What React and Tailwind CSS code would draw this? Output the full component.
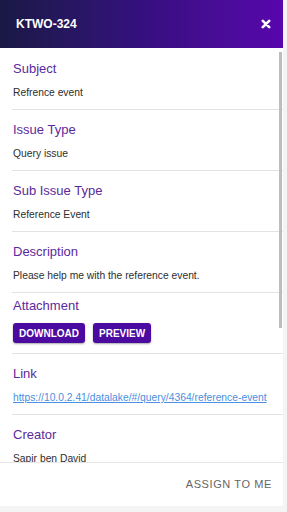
import React from "react";

const font = { fontFamily: '"Liberation Sans", Arial, sans-serif' };

function Section({ label, children, first }) {
  return (
    <div className="ml-[12px] border-b border-[#e3e3e3]">
      <div className={`${first ? "pt-[13px]" : "pt-[12px]"} pl-[1px] pb-[10px]`}>
        <div className="text-[13px] leading-[16px] text-[#5b2a9c]">{label}</div>
        <div className="mt-[10px] text-[10.3px] leading-[12px] text-[#2e2e2e]">{children}</div>
      </div>
    </div>
  );
}

export default function App() {
  return (
    <div className="w-[287px] h-[512px] bg-[#f4f4f4] overflow-hidden" style={font}>
      <div className="w-[283px] h-[506px] bg-white flex flex-col">
        <div className="h-[48px] shrink-0 flex items-center justify-between pl-[16px] pr-[12px] bg-linear-to-r from-[#1a1846] via-[#350f7e] to-[#5806ad]">
          <span className="text-white text-[12px] font-bold">KTWO-324</span>
          <svg width="10" height="10" viewBox="0 0 10 10" className="mt-[-1px]">
            <path d="M1.8 1.8 L8.2 8.2 M8.2 1.8 L1.8 8.2" stroke="white" strokeWidth="2.6" strokeLinecap="round" />
          </svg>
        </div>
        <div className="flex-1 overflow-hidden relative">
          <Section label="Subject" first>Refrence event</Section>
          <Section label="Issue Type">Query issue</Section>
          <Section label="Sub Issue Type">Reference Event</Section>
          <Section label="Description">Please help me with the reference event.</Section>
          <div className="ml-[12px] border-b border-[#e3e3e3]">
            <div className="pt-[5px] pl-[1px] pb-[10px]">
              <div className="text-[13px] leading-[16px] text-[#5b2a9c]">Attachment</div>
              <div className="mt-[9px] flex gap-[8px]">
                <button className="h-[20px] px-[6px] rounded-[3px] bg-[#4b0aa0] text-white text-[10px] font-bold shadow-[0_1px_2px_rgba(0,0,0,0.35)]">
                  DOWNLOAD
                </button>
                <button className="h-[20px] px-[6px] rounded-[3px] bg-[#4b0aa0] text-white text-[10px] font-bold shadow-[0_1px_2px_rgba(0,0,0,0.35)]">
                  PREVIEW
                </button>
              </div>
            </div>
          </div>
          <Section label="Link">
            <span className="text-[#4a8fe0] underline">https://10.0.2.41/datalake/#/query/4364/reference-event</span>
          </Section>
          <Section label="Creator">Sapir ben David</Section>
          <div className="absolute left-[279px] top-[4px] w-[3px] h-[276px] bg-[#bdbdbd]" />
        </div>
        <div className="h-[44px] shrink-0 border-t border-[#e6e6e6] flex items-center justify-end pr-[11px]">
          <span className="text-[11px] tracking-[0.6px] text-[#666]">ASSIGN TO ME</span>
        </div>
      </div>
    </div>
  );
}
